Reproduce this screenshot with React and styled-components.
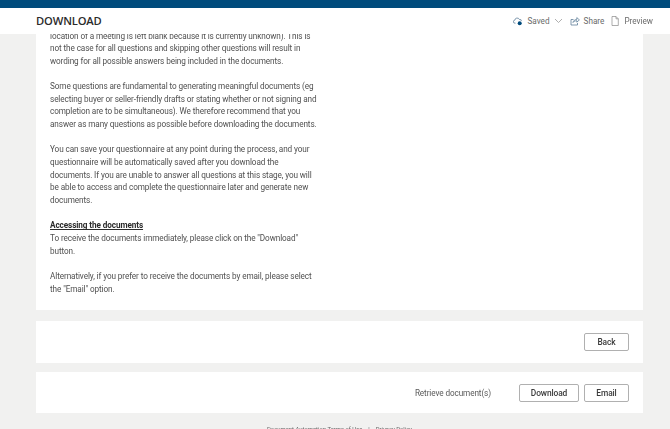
import React from "react";
import styled, { createGlobalStyle } from "styled-components";

const GlobalStyle = createGlobalStyle`
  html, body {
    margin: 0;
    padding: 0;
    height: 100%;
    overflow: hidden;
    background: #f1f1f0;
  }
  body {
    font-family: Roboto, "Open Sans", sans-serif;
    color: #505050;
  }
`;

const Page = styled.div`
  display: flex;
  flex-direction: column;
  height: 429px;
  overflow: hidden;
  filter: blur(0.4px);
`;

const TopBar = styled.div`
  flex: none;
  height: 8px;
  background: #004b7c;
`;

const Header = styled.header`
  flex: none;
  height: 26px;
  display: flex;
  align-items: center;
  justify-content: space-between;
  padding: 0 17px 1px 36px;
  box-sizing: border-box;
  background: #fff;
`;

const Title = styled.h1`
  margin: 0;
  font-family: "Open Sans", sans-serif;
  font-size: 11.2px;
  font-weight: 600;
  color: #2b2b2b;
  letter-spacing: -0.15px;
`;

const Actions = styled.div`
  display: flex;
  align-items: center;
  gap: 7px;
`;

const Action = styled.span`
  display: flex;
  align-items: center;
  gap: ${(p) => p.$gap}px;
  font-size: 8.2px;
  color: #6a6a6a;
`;

const Main = styled.main`
  flex: 1;
  display: flex;
  flex-direction: column;
  padding: 0 27px 0 36px;
`;

const TextCard = styled.section`
  height: 276px;
  overflow: hidden;
  background: #fff;
  padding: 0 14px;
`;

const Copy = styled.div`
  margin-top: -4.5px;
  width: 290px;
  font-size: 8.2px;
  letter-spacing: -0.1px;
  line-height: 12.65px;
  white-space: nowrap;
`;

const Paragraph = styled.p`
  margin: 0 0 12.65px;
`;

const Heading = styled.strong`
  display: block;
  color: #2b2b2b;
  font-weight: 700;
  text-decoration: underline;
`;

const ButtonCard = styled.section`
  height: ${(p) => p.$height}px;
  margin-top: ${(p) => p.$top}px;
  display: flex;
  align-items: center;
  justify-content: flex-end;
  padding: 0 14px;
  background: #fff;
`;

const Label = styled.span`
  margin-right: 28px;
  font-size: 8.2px;
  letter-spacing: -0.1px;
  color: #5a5a5a;
`;

const Button = styled.button`
  width: ${(p) => p.$width}px;
  height: 18px;
  margin-left: ${(p) => p.$left || 0}px;
  padding: 0;
  font-family: inherit;
  font-size: 8.4px;
  font-weight: 500;
  letter-spacing: -0.1px;
  color: #3a3a3a;
  background: #fff;
  border: 1px solid #b0b0b0;
  border-radius: 2px;
`;

const Footer = styled.footer`
  display: flex;
  justify-content: center;
  gap: 6px;
  margin-top: 12px;
  font-size: 5.9px;
  line-height: 8px;
  color: #666;
`;

const Icon = styled.svg`
  display: block;
  flex: none;
`;

const SavedIcon = () => (
  <Icon width="10" height="10" viewBox="0 0 10 10" fill="none" stroke="#5f7f99" strokeWidth="0.8">
    <path d="M2.5 7.2H2A1.5 1.5 0 0 1 1.8 4.2 2.4 2.4 0 0 1 6.4 3.500 1.600 1.600 0 0 1 8.400 5" />
    <circle cx="6.7" cy="7.2" r="2" fill="#004b7c" stroke="none" />
  </Icon>
);

const Chevron = () => (
  <Icon width="9" height="6" viewBox="0 0 9 6" fill="none" stroke="#9a9a9a" strokeWidth="0.8">
    <path d="M1 1l3.500 3.500L8 1" />
  </Icon>
);

const ShareIcon = () => (
  <Icon width="10" height="10" viewBox="0 0 10 10" fill="none" stroke="#5f7f99" strokeWidth="0.8">
    <path d="M3.500 3.500H1v5.500h6.500V7" />
    <path d="M3 6.500C3.400 4.500 5 3.400 6.800 3.400V1.600L9.400 3.900 6.800 6.200V4.700C5.200 4.700 4 5.300 3 6.500Z" />
  </Icon>
);

const DocIcon = () => (
  <Icon width="8" height="10" viewBox="0 0 8 10" fill="none" stroke="#8a8a8a" strokeWidth="0.7">
    <path d="M1 .5h4l2.300 2.300V9.500H1Z" />
    <path d="M5 .5v2.300h2.300" />
  </Icon>
);

export default function App() {
  return (
    <Page>
      <GlobalStyle />
      <TopBar />
      <Header>
        <Title>DOWNLOAD</Title>
        <Actions>
          <Action $gap={4}>
            <SavedIcon />
            Saved
            <Chevron />
          </Action>
          <Action $gap={4}>
            <ShareIcon />
            Share
          </Action>
          <Action $gap={5}>
            <DocIcon />
            Preview
          </Action>
        </Actions>
      </Header>
      <Main>
        <TextCard>
          <Copy>
            <Paragraph>
              location of a meeting is left blank because it is currently unknown). This is<br />
              not the case for all questions and skipping other questions will result in<br />
              wording for all possible answers being included in the documents.
            </Paragraph>
            <Paragraph>
              Some questions are fundamental to generating meaningful documents (eg<br />
              selecting buyer or seller-friendly drafts or stating whether or not signing and<br />
              completion are to be simultaneous). We therefore recommend that you<br />
              answer as many questions as possible before downloading the documents.
            </Paragraph>
            <Paragraph>
              You can save your questionnaire at any point during the process, and your<br />
              questionnaire will be automatically saved after you download the<br />
              documents. If you are unable to answer all questions at this stage, you will<br />
              be able to access and complete the questionnaire later and generate new<br />
              documents.
            </Paragraph>
            <Paragraph>
              <Heading>Accessing the documents</Heading>
              To receive the documents immediately, please click on the "Download"<br />
              button.
            </Paragraph>
            <Paragraph>
              Alternatively, if you prefer to receive the documents by email, please select<br />
              the "Email" option.
            </Paragraph>
          </Copy>
        </TextCard>
        <ButtonCard $height={42} $top={11}>
          <Button $width={45}>Back</Button>
        </ButtonCard>
        <ButtonCard $height={41} $top={9}>
          <Label>Retrieve document(s)</Label>
          <Button $width={60}>Download</Button>
          <Button $width={45} $left={5}>Email</Button>
        </ButtonCard>
        <Footer>
          <span>Document Automation Terms of Use</span>
          <span>|</span>
          <span>Privacy Policy</span>
        </Footer>
      </Main>
    </Page>
  );
}
